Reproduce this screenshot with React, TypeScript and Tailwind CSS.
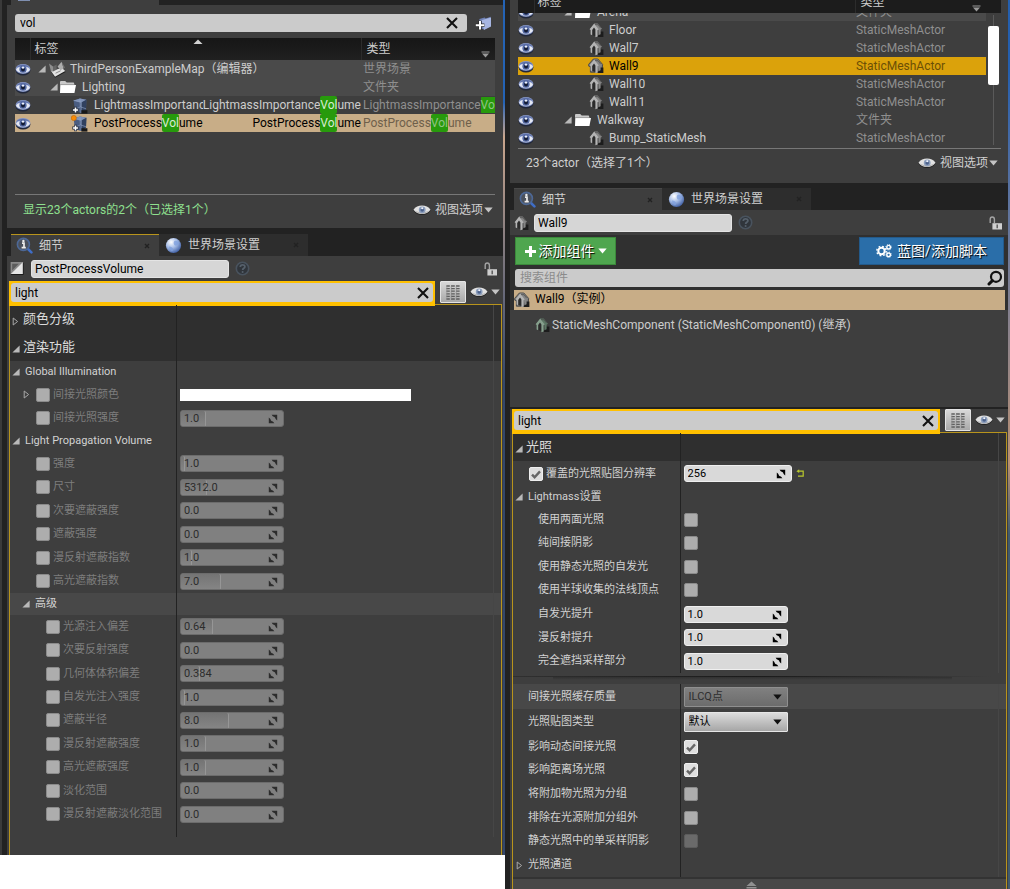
import React, { useId } from 'react';

type Kids = { children?: React.ReactNode };

/* ---------- icons ---------- */

const EyeBlue = () => (
  <svg width="16" height="13" viewBox="0 0 16 13" aria-hidden="true">
    <ellipse cx="8" cy="7.4" rx="7.4" ry="5.2" fill="#20273a" />
    <ellipse cx="8" cy="6" rx="7.4" ry="5" fill="#8797c6" />
    <path d="M1 6.4C3 2.4 13 2.4 15 6.4 13 10.8 3 10.8 1 6.4Z" fill="#e4e8f4" />
    <path d="M1.2 4.8C3.5.8 12.5.8 14.8 4.8 12 2.8 4 2.8 1.2 4.8Z" fill="#5d70a8" />
    <circle cx="8" cy="6.2" r="3.6" fill="#5166a0" />
    <circle cx="8" cy="6.6" r="2" fill="#131c36" />
    <circle cx="8" cy="4.6" r="1.2" fill="#eef2fc" />
  </svg>
);

const EyeWhite = () => (
  <svg width="18" height="12" viewBox="0 0 18 12" aria-hidden="true">
    <path d="M.5 6.4C4 .6 14 .6 17.5 6.4 14 12.4 4 12.4.5 6.4Z" fill="#222" />
    <path d="M.5 5.7C4 .2 14 .2 17.5 5.7 14 11.4 4 11.4.5 5.7Z" fill="#e2e2e2" />
    <path d="M2 6.6C5 11 13 11 16 6.6 13 9 5 9 2 6.6Z" fill="#b4b4b4" />
    <circle cx="9.2" cy="5.8" r="3.4" fill="#8b9dbb" />
    <circle cx="9.2" cy="6" r="1.8" fill="#4a608a" />
    <circle cx="9.2" cy="4.2" r="1" fill="#f2f6ff" />
  </svg>
);

const House = ({ tone = 'gray' }: { tone?: 'gray' | 'green' | 'outlined' }) => {
  const light = tone === 'green' ? '#86a08d' : '#b4b4b4';
  const mid = tone === 'green' ? '#5c7764' : '#868686';
  return (
    <svg width="16" height="16" viewBox="0 0 16 16" aria-hidden="true">
      {tone === 'outlined' && (
        <path d="M.6 6.4 5.4 1h4.4l4.8 5.4-.6 7.8H2.4V8.6L.8 8.2Z" fill="#7d7d7d" stroke="#4a4a4a" strokeWidth="1" />
      )}
      <path d="M11 9.6h4.4V15H9.8Z" fill="#1c1c1c" />
      <path d="M3.6 7.4 6.4 4.6 9.2 8v6.4L3.6 13Z" fill="#2b2b2b" />
      <path d="m6.2 1.6 3.4-.2 4.4 5.4-1.4.9v4.6l-2.2.9V7.4Z" fill={mid} />
      <path d="M1.6 7.2 6.2 1.6l4.6 6-1.2.7v6.2l-2.2.7V7.6L6 5.6 4.2 7.9v5.3l-1.6-.7V7.9Z" fill={light} />
      <path d="m7 2.6 3 .1 2.6 3.4" fill="none" stroke="#4a4a4a" strokeWidth=".7" />
    </svg>
  );
};

const Folder = () => (
  <svg width="17" height="14" viewBox="0 0 17 14" aria-hidden="true">
    <path d="M1 2.2C1 1.4 1.5 1 2.2 1h4l1.5 1.6H14c.8 0 1.2.4 1.2 1.2V13H1Z" fill="#c9c9c9" />
    <path d="M2 5h15l-1.6 8H1Z" fill="#fff" />
    <path d="M1 4.6h14.6" stroke="#8c8c8c" strokeWidth=".7" />
  </svg>
);

const MapIcon = () => (
  <svg width="18" height="17" viewBox="0 0 18 17" aria-hidden="true">
    <path d="M3 10.5 14 7.5l3.6 3.4L7 16.8Z" fill="#1d1d1d" />
    <path d="M3 10 14 7l3.2 3L7 15.8Z" fill="#e2e2e2" />
    <path d="M1 2.5 5 5.4v5L3 10.6Z" fill="#8f8f8f" />
    <path d="M5 5.4 8.6 3.6v5.2L5 10.4Z" fill="#666" />
    <path d="M9.6 5.6 13.6.8l2 6.6-3.2 1.8Z" fill="#adadad" />
    <path d="m13.6.8 2 6.6 1.4-.9Z" fill="#737373" />
    <path d="m7.6 12.2 5-2.4" stroke="#8a8a8a" strokeWidth="1" />
  </svg>
);

const Volume = ({ dirty = false }: { dirty?: boolean }) => (
  <svg width="18" height="17" viewBox="0 0 18 17" aria-hidden="true">
    <path d="m2.6 3.4 6.4-1.8 6.4 1.2L15 12.6 10 16l-6-2Z" fill="#4a5d82" />
    <path d="m2.6 3.4 6.4-1.8 6.4 1.2L10.4 5.4Z" fill="#8093b8" />
    <path d="M10.4 5.4 15.4 2.8 15 12.6 10 16Z" fill="#31415f" />
    <path d="m2.6 3.4 7.8 2M10.4 5.4 10 16M9 1.6l.3 8.2M9.3 9.8l5.8 2M9.3 9.8 3.6 13" stroke="#93a6c8" strokeWidth=".6" fill="none" />
    <path d="M10.4 13.2h6v3.4h-6Z" fill="#181818" />
    <path d="M4.5 9.8v6.4M1.3 13h6.4" stroke="#1d2536" strokeWidth="2.8" />
    <path d="M4.5 10.4v5.2M1.9 13h5.2" stroke="#fff" strokeWidth="1.6" />
    {dirty && <circle cx="2.8" cy="3" r="2.6" fill="#f98a05" stroke="#b35f00" strokeWidth=".5" />}
  </svg>
);

const InfoLens = () => (
  <svg width="17" height="17" viewBox="0 0 17 17" aria-hidden="true">
    <path d="m11 11 4.4 4.4" stroke="#3f6dc6" strokeWidth="2.6" strokeLinecap="round" />
    <circle cx="7.4" cy="7.4" r="6" fill="#4b515c" stroke="#4d6896" strokeWidth="1.6" />
    <path d="M6 6.2h2v4.2M5.6 10.6h4.2" stroke="#ededed" strokeWidth="1.7" fill="none" />
    <circle cx="7.4" cy="3.9" r="1.2" fill="#ededed" />
  </svg>
);

const Globe = () => (
  <svg width="17" height="17" viewBox="0 0 17 17" aria-hidden="true">
    <defs>
      <radialGradient id="globe-shade" cx=".35" cy=".28" r=".8">
        <stop offset="0" stopColor="#fff" />
        <stop offset=".45" stopColor="#a9bfe8" />
        <stop offset="1" stopColor="#33549c" />
      </radialGradient>
    </defs>
    <circle cx="8.5" cy="8.5" r="7.6" fill="url(#globe-shade)" />
    <path d="M9.5 4c2-.6 4 .8 4.6 3-1.6.4-2.2 2-4 1.6-1.4-.6-2-3.6-.6-4.6ZM4 9.6c2 0 4 1 4.4 3.4l-1.4 1.4C5.2 13.6 4 12 4 9.6Z" fill="#7fa0dd" opacity=".8" />
  </svg>
);

const Cross = () => (
  <svg width="12" height="12" viewBox="0 0 12 12" aria-hidden="true">
    <path d="m1 1 10 10M11 1 1 11" stroke="#111" strokeWidth="2.1" />
  </svg>
);

const AddFolder = () => (
  <svg width="17" height="15" viewBox="0 0 17 15" aria-hidden="true">
    <path d="M4.4 3 9.6 1.4l1.2 1L15.6.8V10L9 13.6 4.8 12Z" fill="#6f80b4" />
    <path d="m6.4 4.2 9.6-2.6v9L9 14Z" fill="#a7b6e2" />
    <path d="M5 4.8v8.8M.6 9.2h8.8" stroke="#2b2b2b" strokeWidth="3.4" />
    <path d="M5 5v8.4M.8 9.2h8.4" stroke="#fff" strokeWidth="2" />
  </svg>
);

const Lock = () => (
  <svg width="13" height="14" viewBox="0 0 13 14" aria-hidden="true">
    <path d="M1.2 7V3.2C1.2 1.8 2 1 3.2 1S5.4 1.8 5.4 3.2V7" fill="none" stroke="#a3a3a3" strokeWidth="1.4" />
    <path d="M3.4 7.2H13V13.5H3.4Z" fill="#cfcfcf" />
    <path d="M8.2 8.6v3.6" stroke="#555" strokeWidth="1.4" />
  </svg>
);

const Help = () => (
  <svg width="15" height="15" viewBox="0 0 15 15" aria-hidden="true">
    <circle cx="7.5" cy="7.5" r="6.2" fill="#30353b" stroke="#49535e" strokeWidth="1.6" />
    <path d="M5.3 6c0-3 4.6-2.8 4.6-.3 0 1.6-2.2 1.6-2.2 3.2" fill="none" stroke="#56606b" strokeWidth="1.8" />
    <circle cx="7.6" cy="11" r="1" fill="#56606b" />
  </svg>
);

const BrushCube = () => (
  <svg width="14" height="15" viewBox="0 0 14 15" aria-hidden="true">
    <path d="M1 2h12.6v12H1Z" fill="#1c1c1c" />
    <path d="M.6 1h12.2L.6 13Z" fill="#8a8a8a" />
    <path d="M2.2 2.8h6.6L2.2 9.4Z" fill="#5c5c5c" />
    <path d="M12.8 1v12H.6Z" fill="#e6e6e6" />
  </svg>
);

const Caret = ({ dark = false }: { dark?: boolean }) => (
  <svg width="9" height="6" viewBox="0 0 9 6" aria-hidden="true">
    <path d="M.3.6h8.4L4.5 5.4Z" fill={dark ? '#111' : '#c4c4c4'} />
  </svg>
);

const Opened = () => (
  <svg width="8" height="8" viewBox="0 0 8 8" aria-hidden="true">
    <path d="M7.6.4v7.2H.4Z" fill="#b9b9b9" />
  </svg>
);

const Closed = () => (
  <svg width="7" height="9" viewBox="0 0 7 9" aria-hidden="true">
    <path d="M1.2 1v7L5.6 4.5Z" fill="none" stroke="#a8a8a8" strokeWidth="1" />
  </svg>
);

const SpinArrows = () => (
  <svg width="10" height="10" viewBox="0 0 10 10" className="shrink-0" aria-hidden="true">
    <path d="M3.6.8h5.6v5.6L7.6 4.9C7.4 3.6 6.4 2.6 5 2.4Z" fill="currentColor" />
    <path d="M.8 3.6V9.2H6.4L4.9 7.6C3.6 7.4 2.6 6.4 2.4 5Z" fill="currentColor" />
  </svg>
);

const Grid = () => (
  <svg width="14" height="15" viewBox="0 0 14 15" aria-hidden="true">
    {[1, 3.6, 6.2, 8.8, 11.4, 14].map((y) => (
      <path key={y} d={`M.4 ${y}h3.4M5 ${y}h3.8M10 ${y}h3.6`} stroke="#5e5e5e" strokeWidth="1.3" />
    ))}
    <path d="M.9.6v13.8M5.3.6v13.8M10.3.6v13.8" stroke="#8a8a8a" strokeWidth=".6" />
  </svg>
);

const Gears = () => (
  <svg width="16" height="14" viewBox="0 0 16 14" aria-hidden="true">
    <circle cx="5.5" cy="7" r="3.2" fill="none" stroke="#fff" strokeWidth="2" />
    <circle cx="5.5" cy="7" r="4.7" fill="none" stroke="#fff" strokeWidth="1.4" strokeDasharray="1.8 1.9" />
    <circle cx="12.6" cy="3.2" r="1.8" fill="none" stroke="#fff" strokeWidth="1.4" />
    <circle cx="12.6" cy="10.8" r="1.8" fill="none" stroke="#fff" strokeWidth="1.4" />
    <circle cx="12.6" cy="3.2" r="2.8" fill="none" stroke="#fff" strokeWidth=".8" strokeDasharray="1.1 1.1" />
    <circle cx="12.6" cy="10.8" r="2.8" fill="none" stroke="#fff" strokeWidth=".8" strokeDasharray="1.1 1.1" />
  </svg>
);

/* ---------- outliner ---------- */

const Vol = ({ children, muted = false }: Kids & { muted?: boolean }) => (
  <mark className={muted ? 'rounded-[2px] bg-[#279a0c] py-[2px] text-[#8fc584]' : 'rounded-[2px] bg-[#279a0c] py-[2px] text-[#d8ecd2]'}>
    {children}
  </mark>
);

const EyeCell = () => (
  <button type="button" aria-label="切换可见性" className="flex h-[18px] w-4 items-center">
    <EyeBlue />
  </button>
);

const ViewOptions = () => (
  <button type="button" className="flex items-center gap-1 text-[12px] text-[#d0d0d0]">
    <EyeWhite />
    <span className="flex items-center gap-px">视图选项<Caret /></span>
  </button>
);

const SortMark = () => (
  <svg width="10" height="6" viewBox="0 0 10 6" aria-hidden="true">
    <path d="M.5 5 5 .6 9.5 5Z" fill="#d2d2d2" />
  </svg>
);

const HeaderMenu = () => (
  <svg width="9" height="7" viewBox="0 0 9 7" aria-hidden="true">
    <path d="M.5 1h8" stroke="#9a9a9a" strokeWidth="1" />
    <path d="M1 2.6h7L4.5 6.4Z" fill="#9a9a9a" />
  </svg>
);

/* ---------- property controls ---------- */

const SearchBar = ({ label }: { label: string }) => (
  <div className="flex h-[25px] items-stretch">
    <div className="flex min-w-0 flex-1 items-center bg-[#ffc000] p-[2px] pb-[4px]">
      <div className="flex h-[19px] flex-1 items-center rounded-[3px] bg-[#cbcbcb] pr-1 pl-1">
        <input aria-label={label} defaultValue="light" className="min-w-0 flex-1 bg-transparent text-[12px] text-black outline-none" />
        <button type="button" aria-label="清除"><Cross /></button>
      </div>
    </div>
    <div className="flex w-[67px] items-center pb-[3px] pl-[5px]">
      <button type="button" aria-label="属性矩阵" className="flex h-[22px] w-[26px] items-center justify-center rounded-[1px] border border-[#e4e4e4] bg-linear-to-b from-[#d8d8d8] to-[#a9a9a9]">
        <Grid />
      </button>
      <button type="button" aria-label="视图选项" className="flex items-center gap-[3px] pl-1">
        <EyeWhite />
        <Caret />
      </button>
    </div>
  </div>
);

const checkStyle =
  'size-[14px] shrink-0 appearance-none rounded-[2px] border border-[#8b8b8b] bg-[#adadad] checked:border-[#eee] checked:bg-[#dedede] disabled:border-[#5c5c5c] disabled:bg-[#6a6a6a]';

const Check = ({ id, label, checked = false, disabled = false }: { id?: string; label?: string; checked?: boolean; disabled?: boolean }) => (
  <span className="grid size-[14px] shrink-0">
    <input id={id} aria-label={label} type="checkbox" defaultChecked={checked} disabled={disabled} className={`${checkStyle} [grid-area:1/1]`} />
    {checked && (
      <svg viewBox="0 0 14 14" className="pointer-events-none size-[14px] [grid-area:1/1]" aria-hidden="true">
        <path d="m3 7.6 2.6 2.6L11 4.4" fill="none" stroke="#666" strokeWidth="2.4" />
      </svg>
    )}
  </span>
);

const Spin = ({ id, label, value, fill = 0, muted = false, wide = false }: { id?: string; label?: string; value: string; fill?: number; muted?: boolean; wide?: boolean }) => (
  <div
    className={
      (muted ? 'border-[#6c6c6c] bg-[#808080] text-[#2c2c2c] ' : 'border-[#efefef] bg-[#d9d9d9] text-black ') +
      (wide ? 'w-[108px] ' : 'w-[104px] ') +
      'grid h-[17px] grid-cols-1 items-center overflow-hidden rounded-[3px] border'
    }
  >
    {fill > 0 && (
      <span className="h-full rounded-r-[2px] border-r border-[#969696] bg-linear-to-b from-[#747474] to-[#868686] [grid-area:1/1]" style={{ width: fill }} />
    )}
    <div className="flex items-center pr-[5px] pl-[3px] [grid-area:1/1]">
      <input id={id} aria-label={label} defaultValue={value} className="min-w-0 flex-1 bg-transparent text-[11px] outline-none" />
      <SpinArrows />
    </div>
  </div>
);

const Choice = ({ id, value, disabled = false }: { id: string; value: string; disabled?: boolean }) => (
  <div className="grid h-[20px] w-[104px] items-center">
    <select
      id={id}
      disabled={disabled}
      className="h-[20px] w-full appearance-none rounded-[1px] border border-[#e6e6e6] bg-linear-to-b from-[#dcdcdc] to-[#a6a6a6] pl-1 text-[11px] text-black [grid-area:1/1] disabled:border-[#8f8f8f] disabled:from-[#808080] disabled:to-[#6c6c6c] disabled:text-[#2e2e2e] disabled:opacity-100"
    >
      <option>{value}</option>
    </select>
    <span className="pointer-events-none mr-[6px] justify-self-end [grid-area:1/1]"><Caret dark /></span>
  </div>
);

const Row = ({ left, right, className = '' }: { left: React.ReactNode; right?: React.ReactNode; className?: string }) => (
  <div className={`flex items-stretch ${className}`}>
    <div className="flex w-[34%] shrink-0 items-center border-r border-[#222]">{left}</div>
    <div className="flex flex-1 items-center border-r border-[#464646] pl-[3px]">{right}</div>
    <div className="w-[7px]" />
  </div>
);

const Category = ({ title, closed = false }: { title: string; closed?: boolean }) => (
  <Row
    className="h-[28px] bg-[#2f2f2f]"
    left={
      <button type="button" className="flex items-center gap-[3px] pl-[2px] text-[13px] text-[#dcdcdc]">
        <span className="flex w-2 pt-1">{closed ? <Closed /> : <Opened />}</span>
        {title}
      </button>
    }
  />
);

const SubGroup = ({ title, className = '', indent = 'pl-[2px]' }: { title: string; className?: string; indent?: string }) => (
  <Row
    className={`h-[22px] ${className}`}
    left={
      <button type="button" className={`flex items-center gap-[5px] text-[11px] text-[#d2d2d2] ${indent}`}>
        <Opened />
        {title}
      </button>
    }
  />
);

type Prop = { name: string; value?: string; fill?: number; color?: boolean };

const OverrideRow = ({ prop, indent }: { prop: Prop; indent: string }) => {
  const id = useId();
  return (
    <Row
      left={
        <div className={`flex items-center gap-[3px] ${indent}`}>
          {prop.color && (
            <button type="button" aria-label="展开" className="mr-[3px]"><Closed /></button>
          )}
          <Check id={id} />
          <label htmlFor={id} className="text-[11px] whitespace-nowrap text-[#7d7d7d]">{prop.name}</label>
        </div>
      }
      right={
        prop.color ? (
          <button type="button" aria-label={prop.name} className="h-[12px] w-[231px] bg-white" />
        ) : (
          <Spin label={prop.name} value={prop.value ?? ''} fill={prop.fill} muted />
        )
      }
    />
  );
};

const indirect: Prop[] = [
  { name: '间接光照颜色', color: true },
  { name: '间接光照强度', value: '1.0', fill: 25 },
];

const propagation: Prop[] = [
  { name: '强度', value: '1.0', fill: 4 },
  { name: '尺寸', value: '5312.0', fill: 26 },
  { name: '次要遮蔽强度', value: '0.0' },
  { name: '遮蔽强度', value: '0.0' },
  { name: '漫反射遮蔽指数', value: '1.0', fill: 11 },
  { name: '高光遮蔽指数', value: '7.0', fill: 40 },
];

const advanced: Prop[] = [
  { name: '光源注入偏差', value: '0.64', fill: 32 },
  { name: '次要反射强度', value: '0.0' },
  { name: '几何体体积偏差', value: '0.384', fill: 19 },
  { name: '自发光注入强度', value: '1.0', fill: 4 },
  { name: '遮蔽半径', value: '8.0', fill: 48 },
  { name: '漫反射遮蔽强度', value: '1.0', fill: 25 },
  { name: '高光遮蔽强度', value: '1.0', fill: 25 },
  { name: '淡化范围', value: '0.0' },
  { name: '漫反射遮蔽淡化范围', value: '0.0' },
];

const FieldRow = ({ name, indent, className = '', control }: { name: string; indent: string; className?: string; control: (id: string) => React.ReactNode }) => {
  const id = useId();
  return (
    <Row
      className={className}
      left={<label htmlFor={id} className={`text-[11px] whitespace-nowrap text-[#d2d2d2] ${indent}`}>{name}</label>}
      right={control(id)}
    />
  );
};

const TabClose = () => (
  <svg width="6" height="6" viewBox="0 0 6 6" aria-hidden="true">
    <path d="m1 1 4 4M5 1 1 5" stroke="#222" strokeWidth="1.4" />
  </svg>
);

const Tabs = ({ gold = false }: { gold?: boolean }) => (
  <div role="tablist" className="flex h-[22px] pl-1 text-[12px] text-[#cfcfcf]">
    <button type="button" role="tab" aria-selected="true" className={`flex w-[148px] items-center border-t bg-[#3e3e3e] pr-[9px] pl-[5px] ${gold ? 'border-[#b8941c]' : 'border-[#484848]'}`}>
      <InfoLens />
      <span className="flex-1 pl-[6px] text-left">细节</span>
      <TabClose />
    </button>
    <button type="button" role="tab" aria-selected="false" className="flex w-[149px] items-center bg-[#2d2d2d] pr-[9px] pl-[6px]">
      <Globe />
      <span className="flex-1 pl-[6px] text-left">世界场景设置</span>
      <TabClose />
    </button>
  </div>
);

const NameRow = ({ icon, value }: { icon: React.ReactNode; value: string }) => (
  <div className="flex h-[25px] items-center bg-[#3e3e3e] pr-[6px] pl-[3px]">
    <span className="flex w-[21px]">{icon}</span>
    <input aria-label="名称" defaultValue={value} className="h-[18px] w-[198px] rounded-[3px] border border-[#e4e4e4] bg-[#d6d6d6] px-[3px] text-[12px] text-black" />
    <button type="button" aria-label="帮助" className="ml-[6px]"><Help /></button>
    <button type="button" aria-label="锁定" className="ml-auto"><Lock /></button>
  </div>
);

/* ---------- windows ---------- */

const LeftWindow = () => (
  <section className="flex bg-[#222]">
    <div className="w-[2px] bg-[#3a3a3a]" />
    <div className="ml-[5px] flex min-w-0 flex-1 flex-col">
      <div className="flex h-[5px] pl-1">
        <div className="w-[148px] bg-[#3e3e3e] pl-[7px]">
          <div className="h-px w-3 bg-[#7f8fb0]" />
        </div>
      </div>
      <div className="bg-[#3e3e3e] px-2 pt-[9px]">
        <div className="flex items-center">
          <div className="flex h-[18px] flex-1 items-center rounded-[3px] bg-[#cbcbcb] pr-[9px] pl-[5px]">
            <input aria-label="搜索" defaultValue="vol" className="min-w-0 flex-1 bg-transparent text-[12px] text-black outline-none" />
            <button type="button" aria-label="清除"><Cross /></button>
          </div>
          <button type="button" aria-label="新建文件夹" className="pr-[3px] pl-2"><AddFolder /></button>
        </div>
        <div className="mt-[6px] min-h-[156px]">
          <table className="w-full table-fixed border-collapse text-[12px] text-[#cdcdcd]">
            <colgroup>
              <col className="w-[15px]" />
              <col />
              <col className="w-[134px]" />
            </colgroup>
            <thead>
              <tr className="h-[22px] bg-linear-to-b from-[#161616] to-[#202020]">
                <td className="border-r border-[#2c2c2c] p-0" />
                <th className="border-r border-[#2c2c2c] p-0 pl-1 text-left font-normal">
                  <div className="grid items-center">
                    <span className="[grid-area:1/1]">标签</span>
                    <span className="mb-[14px] justify-self-center [grid-area:1/1]"><SortMark /></span>
                  </div>
                </th>
                <th className="p-0 pr-[5px] pl-[5px] text-left font-normal">
                  <div className="flex items-center justify-between">
                    类型
                    <span className="pt-[10px]"><HeaderMenu /></span>
                  </div>
                </th>
              </tr>
            </thead>
            <tbody className="[&_td]:p-0">
              <tr className="h-[18px] bg-[#4a4a4a]">
                <td><EyeCell /></td>
                <td>
                  <div className="flex h-[18px] items-center gap-[2px] pl-2 whitespace-nowrap">
                    <Opened />
                    <MapIcon />
                    <span className="pl-[2px]">ThirdPersonExampleMap（编辑器）</span>
                  </div>
                </td>
                <td className="text-[#8f8f8f]">
                  <div className="pl-[2px]">世界场景</div>
                </td>
              </tr>
              <tr className="h-[18px] bg-[#4a4a4a]">
                <td><EyeCell /></td>
                <td>
                  <div className="flex h-[18px] items-center gap-px pl-5">
                    <Opened />
                    <Folder />
                    <span className="pl-[5px]">Lighting</span>
                  </div>
                </td>
                <td className="text-[#8f8f8f]"><div className="pl-[2px]">文件夹</div></td>
              </tr>
              <tr className="h-[18px]">
                <td><EyeCell /></td>
                <td>
                  <div className="flex h-[18px] items-center pl-[41px] whitespace-nowrap">
                    <Volume />
                    <span className="ml-[5px] min-w-0 flex-1 overflow-hidden">LightmassImportanceVolume</span>
                    <span>LightmassImportance<Vol>Vol</Vol>ume</span>
                  </div>
                </td>
                <td className="text-[#8f8f8f]">
                  <div className="overflow-hidden pl-[2px] whitespace-nowrap">LightmassImportance<Vol muted>Vol</Vol></div>
                </td>
              </tr>
              <tr className="h-[18px] bg-[#c8ad87] text-black">
                <td><EyeCell /></td>
                <td>
                  <div className="flex h-[18px] items-center pl-[41px] whitespace-nowrap">
                    <Volume dirty />
                    <span className="ml-[5px] min-w-0 flex-1">PostProcess<Vol>Vol</Vol>ume</span>
                    <span>PostProcess<Vol>Vol</Vol>ume</span>
                  </div>
                </td>
                <td className="text-[#6f604b]">
                  <div className="pl-[2px]">PostProcess<Vol muted>Vol</Vol>ume</div>
                </td>
              </tr>
            </tbody>
          </table>
        </div>
        <div className="flex h-[34px] items-center justify-between border-t border-[#777] pr-[2px] pb-1 pl-2">
          <span className="text-[12px] text-[#8fe08f]">显示23个actors的2个（已选择1个）</span>
          <ViewOptions />
        </div>
      </div>
      <div className="mt-[6px]"><Tabs gold /></div>
      <div className="bg-[#3e3e3e]">
        <NameRow icon={<BrushCube />} value="PostProcessVolume" />
        <div className="pr-px pl-[2px]">
          <SearchBar label="搜索细节" />
          <div className="-mt-[2px] border-x border-t border-[#b8941c] bg-[#3e3e3e] pb-[18px]">
            <Category title="颜色分级" closed />
            <Category title="渲染功能" />
            <SubGroup title="Global Illumination" />
            <div className="grid min-h-[47px] auto-rows-fr">
              {indirect.map((p) => <OverrideRow key={p.name} prop={p} indent={p.color ? 'pl-[13px]' : 'pl-[26px]'} />)}
            </div>
            <SubGroup title="Light Propagation Volume" />
            <div className="grid min-h-[141px] auto-rows-fr">
              {propagation.map((p) => <OverrideRow key={p.name} prop={p} indent="pl-[26px]" />)}
            </div>
            <SubGroup title="高级" indent="pl-3" className="bg-[#484848]" />
            <div className="grid min-h-[211px] auto-rows-fr">
              {advanced.map((p) => <OverrideRow key={p.name} prop={p} indent="pl-9" />)}
            </div>
            <Row className="h-[11px]" left={null} />
          </div>
        </div>
      </div>
    </div>
    <div className="w-[2px] bg-linear-to-b from-[#2463b5] from-12% via-[#c9a58c] via-16% to-[#33476b] to-45%" />
  </section>
);

const actors = ['Floor', 'Wall7', 'Wall9', 'Wall10', 'Wall11'];

const ActorRow = ({ name }: { name: string }) => {
  const selected = name === 'Wall9';
  return (
    <tr className={selected ? '[&>td]:bg-[#dba20b] text-black' : ''}>
      <td><EyeCell /></td>
      <td>
        <div className="flex h-[18px] items-center gap-[5px] pl-[54px]">
          <House tone={selected ? 'outlined' : 'gray'} />
          {name}
        </div>
      </td>
      <td className={selected ? 'text-[#6b4f06]' : 'text-[#8f8f8f]'}>StaticMeshActor</td>
    </tr>
  );
};

const RightWindow = () => (
  <section className="flex bg-[#222]">
    <div className="ml-[5px] flex min-w-0 flex-1 flex-col">
      <div className="bg-[#3e3e3e] pr-[7px] pl-2">
        <table className="w-full table-fixed border-collapse text-[12px] text-[#cdcdcd]">
          <colgroup>
            <col className="w-[16px]" />
            <col />
            <col className="w-[130px]" />
            <col className="w-[15px]" />
          </colgroup>
          <thead>
            <tr className="bg-[#1c1c1c]">
              <td className="border-r border-[#2c2c2c] p-0" />
              <th className="border-r border-[#2c2c2c] p-0 text-left font-normal">
                <div className="flex h-[13px] items-end overflow-hidden pl-[3px]"><span className="h-[20px] leading-[18px]">标签</span></div>
              </th>
              <th colSpan={2} className="p-0 text-left font-normal">
                <div className="flex h-[13px] items-end justify-between overflow-hidden pr-5 pl-1">
                  <span className="h-[20px] leading-[18px]">类型</span>
                  <span className="pb-px"><HeaderMenu /></span>
                </div>
              </th>
            </tr>
          </thead>
          <tbody className="[&_td]:p-0">
            <tr>
              <td className="bg-[#4a4a4a]"><div className="flex h-2 items-end overflow-hidden"><EyeCell /></div></td>
              <td className="bg-[#4a4a4a]">
                <div className="flex h-2 items-end overflow-hidden">
                  <div className="flex h-[18px] items-center gap-[2px] pl-[30px]"><Opened /><Folder /><span className="pl-[4px]">Arena</span></div>
                </div>
              </td>
              <td className="bg-[#4a4a4a] text-[#8f8f8f]">
                <div className="flex h-2 items-end overflow-hidden"><span className="h-[18px] leading-[18px]">文件夹</span></div>
              </td>
              <td rowSpan={8}>
                <div className="flex h-[130px] flex-col items-center">
                  <div className="h-[11px] w-px bg-[#5a5a5a]" />
                  <div className="h-[59px] w-[11px] rounded-[2px] bg-white" />
                  <div className="w-px flex-1 bg-[#5a5a5a]" />
                </div>
              </td>
            </tr>
            {actors.map((a) => <ActorRow key={a} name={a} />)}
            <tr>
              <td><EyeCell /></td>
              <td>
                <div className="flex h-[18px] items-center gap-[2px] pl-[30px]"><Opened /><Folder /><span className="pl-[4px]">Walkway</span></div>
              </td>
              <td className="text-[#8f8f8f]">文件夹</td>
            </tr>
            <ActorRow name="Bump_StaticMesh" />
          </tbody>
        </table>
        <div className="mt-px flex h-[35px] items-center justify-between border-t border-[#777] pr-[3px] pb-[6px] pl-2">
          <span className="text-[12px] text-[#d0d0d0]">23个actor（选择了1个）</span>
          <ViewOptions />
        </div>
      </div>
      <div className="mt-[5px]"><Tabs /></div>
      <NameRow icon={<House />} value="Wall9" />
      <div className="bg-[#303030] pt-[2px]">
        <div className="flex justify-between pr-1 pl-[5px]">
          <button type="button" className="flex h-[28px] w-[101px] items-center justify-center gap-[3px] border border-[#3b8a3b] bg-[#4fa64f] text-[14px] text-white [text-shadow:1px_1px_1px_#000]">
            <svg width="11" height="11" viewBox="0 0 11 11" aria-hidden="true"><path d="M5.5 0v11M0 5.5h11" stroke="#fff" strokeWidth="3" /></svg>
            添加组件
            <svg width="9" height="6" viewBox="0 0 9 6" aria-hidden="true"><path d="M.3.6h8.4L4.5 5.4Z" fill="#fff" /></svg>
          </button>
          <button type="button" className="flex h-[28px] w-[145px] items-center justify-center gap-[5px] border border-[#235a8b] bg-[#2a6ea9] text-[14px] text-white [text-shadow:1px_1px_1px_#000]">
            <Gears />
            蓝图/添加脚本
          </button>
        </div>
        <div className="mt-1 mr-1 ml-[5px] flex h-[18px] items-center rounded-[3px] bg-[#cbcbcb] pr-px pl-[5px]">
          <input aria-label="搜索组件" placeholder="搜索组件" className="min-w-0 flex-1 bg-transparent text-[12px] outline-none placeholder:text-[#8b8b8b]" />
          <svg width="16" height="16" viewBox="0 0 16 16" aria-hidden="true">
            <circle cx="9" cy="6.8" r="5" fill="none" stroke="#111" strokeWidth="2.2" />
            <path d="M5.4 10.6 2 14" stroke="#111" strokeWidth="3" strokeLinecap="round" />
          </svg>
        </div>
        <div className="mt-[3px] mr-[3px] ml-1 flex h-[20px] items-center gap-[5px] bg-[#c8ad87] text-[12px] text-black">
          <House tone="outlined" />
          <span className="pb-[2px]">Wall9（实例）</span>
        </div>
        <div className="flex min-h-[99px] items-start border-b-2 border-[#222] bg-[#3e3e3e] pt-[7px] pl-6 text-[12px] text-[#cdcdcd]">
          <div className="flex items-center gap-[2px]">
            <House tone="green" />
            StaticMeshComponent (StaticMeshComponent0) (继承)
          </div>
        </div>
      </div>
      <div className="bg-[#3e3e3e] pr-px pl-[2px]">
        <SearchBar label="搜索细节" />
        <div className="-mt-[2px] border-x border-t border-[#b8941c] bg-[#3e3e3e]">
          <Category title="光照" />
          <Row
            className="h-[25px]"
            left={
              <label className="flex items-center gap-[3px] pl-4 text-[11px] whitespace-nowrap text-[#d2d2d2]">
                <Check checked />
                覆盖的光照贴图分辨率
              </label>
            }
            right={
              <>
                <Spin label="覆盖的光照贴图分辨率" value="256" wide />
                <button type="button" aria-label="重置" className="pl-1">
                  <svg width="9" height="9" viewBox="0 0 9 9" aria-hidden="true">
                    <path d="M3 2.2h4.2v5H2" fill="none" stroke="#b9c92c" strokeWidth="1.2" />
                    <path d="M.4 2.2 3.2.3v3.8Z" fill="#b9c92c" />
                  </svg>
                </button>
              </>
            }
          />
          <SubGroup title="Lightmass设置" />
          <div className="grid min-h-[165px] auto-rows-fr">
            {['使用两面光照', '纯间接阴影', '使用静态光照的自发光', '使用半球收集的法线顶点'].map((n) => (
              <FieldRow key={n} name={n} indent="pl-[25px]" control={(id) => <Check id={id} />} />
            ))}
            {['自发光提升', '漫反射提升', '完全遮挡采样部分'].map((n) => (
              <FieldRow key={n} name={n} indent="pl-[25px]" control={(id) => <Spin id={id} value="1.0" />} />
            ))}
          </div>
          <div className="h-[11px] pt-[3px] pr-[14px]">
            <div className="h-px bg-linear-to-r from-[#303030] via-[#1a1a1a] to-[#3e3e3e]" />
            <div className="mx-10 h-[3px] bg-linear-to-b from-[#313131] to-[#3e3e3e]" />
          </div>
          <FieldRow name="间接光照缓存质量" indent="pl-[15px]" className="h-[25px] bg-[#484848]" control={(id) => <Choice id={id} value="ILCQ点" disabled />} />
          <FieldRow name="光照贴图类型" indent="pl-[15px]" className="h-[26px]" control={(id) => <Choice id={id} value="默认" />} />
          <div className="grid min-h-[142px] auto-rows-fr">
            {['影响动态间接光照', '影响距离场光照'].map((n) => (
              <FieldRow key={n} name={n} indent="pl-[15px]" control={(id) => <Check id={id} checked />} />
            ))}
            {['将附加物光照为分组', '排除在光源附加分组外'].map((n) => (
              <FieldRow key={n} name={n} indent="pl-[15px]" control={(id) => <Check id={id} />} />
            ))}
            <FieldRow name="静态光照中的单采样阴影" indent="pl-[15px]" control={(id) => <Check id={id} disabled />} />
            <Row
              left={
                <button type="button" className="flex items-center gap-[5px] pl-[3px] text-[11px] text-[#d2d2d2]">
                  <Closed />
                  光照通道
                </button>
              }
            />
          </div>
          <button type="button" aria-label="收起高级选项" className="flex h-[13px] w-full items-center justify-center border-t-2 border-[#333] bg-[#484848] pr-4">
            <svg width="11" height="8" viewBox="0 0 11 8" aria-hidden="true">
              <path d="M.5 5 5.5.4 10.5 5ZM.5 6h10v1.6H.5Z" fill="#909090" />
            </svg>
          </button>
        </div>
      </div>
    </div>
    <div className="w-[2px] bg-linear-to-b from-[#245fae] from-8% via-[#b98f72] via-52% to-[#3f5a6e] to-60%" />
  </section>
);

export default function App() {
  return (
    <main className="grid grid-cols-2 items-start bg-white font-[Roboto,'Noto_Sans_CJK_SC',sans-serif] leading-4">
      <LeftWindow />
      <RightWindow />
    </main>
  );
}
